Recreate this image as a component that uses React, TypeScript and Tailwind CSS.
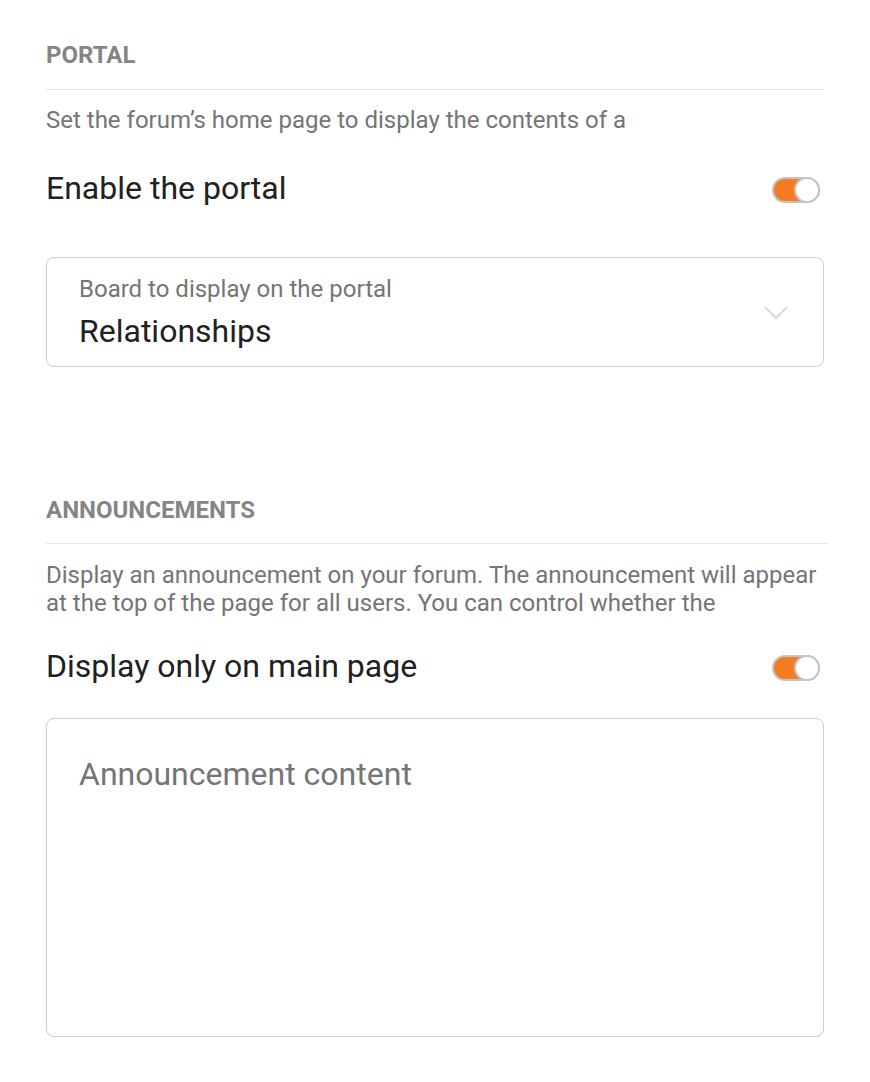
import React from "react";

const Toggle = () => (
  <div className="relative mt-[4px] h-[26px] w-[48px] shrink-0 rounded-full border-2 border-[#c4c4c4] bg-[#f57c22]">
    <div className="absolute right-[-2px] top-[-2px] h-[26px] w-[26px] rounded-full border-2 border-[#c4c4c4] bg-white" />
  </div>
);

const SectionHeader = ({ title, wide }: { title: string; wide?: boolean }) => (
  <>
    <h2 className="text-[24px] font-bold leading-[28px] text-[#858585]">{title}</h2>
    <div className={`h-px bg-[#e6e6e6] ${wide ? "mt-[19px] mr-[-5px]" : "mt-[20px]"}`} />
  </>
);

const App = () => {
  return (
    <div className="min-h-screen bg-white font-['Roboto','Liberation_Sans',sans-serif]">
      <div className="px-[46px] pt-[41px]">
        {/* Portal */}
        <SectionHeader title="PORTAL" />
        <p className="mt-[16px] text-[24px] leading-[28px] text-[#757575]">
          Set the forum’s home page to display the contents of a
        </p>
        <div className="mt-[34px] flex h-[40px] items-center justify-between pr-[4px]">
          <span className="text-[32px] leading-[40px] text-[#212121]">Enable the portal</span>
          <Toggle />
        </div>

        <div className="mt-[49px] flex h-[110px] justify-between rounded-[8px] border border-[#cccccc] pl-[32px] pr-[35px] pt-[17px]">
          <div className="flex flex-col">
            <span className="text-[24px] leading-[28px] text-[#757575]">Board to display on the portal</span>
            <span className="mt-[10px] text-[32px] leading-[36px] text-[#212121]">Relationships</span>
          </div>
          <svg className="mt-[31px]" width="24" height="14" viewBox="0 0 24 14" fill="none">
            <path d="M1 1l11 11L23 1" stroke="#cfcfcf" strokeWidth="1.6" />
          </svg>
        </div>

        {/* Announcements */}
        <div className="mt-[129px]">
          <SectionHeader title="ANNOUNCEMENTS" wide />
        </div>
        <p className="mt-[17px] text-[24px] leading-[28px] text-[#757575]">
          <span className="block whitespace-nowrap">
            Display an announcement on your forum. The announcement will appear
          </span>
          <span className="block whitespace-nowrap">
            at the top of the page for all users. You can control whether the
          </span>
        </p>
        <div className="mt-[29px] flex h-[40px] items-center justify-between pr-[4px]">
          <span className="text-[32px] leading-[40px] text-[#212121]">Display only on main page</span>
          <Toggle />
        </div>

        <div className="mt-[32px] h-[319px] rounded-[8px] border border-[#cccccc] px-[32px] pt-[37px]">
          <span className="text-[32px] leading-[36px] text-[#757575]">Announcement content</span>
        </div>
      </div>
    </div>
  );
};

export default App;
